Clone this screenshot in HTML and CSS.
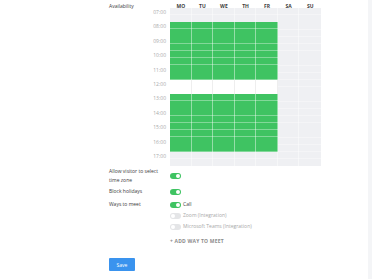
FILE: index.html
```html
<!DOCTYPE html>
<html>
  <head>
    <title>Availability</title>
    <meta name="viewport" content="width=device-width, initial-scale=1">
    <link rel="stylesheet" href="styles.css">
  </head>
  <body>
    <div class="page">
      <div class="settings">
        <div class="row availability">
          <div class="label label-short">Availability</div>
          <div class="schedule">
            <div class="corner"></div>
            <div class="day">MO</div>
            <div class="day">TU</div>
            <div class="day">WE</div>
            <div class="day">TH</div>
            <div class="day">FR</div>
            <div class="day">SA</div>
            <div class="day">SU</div>

            <div class="hours">
              <div>07:00</div>
              <div>08:00</div>
              <div>09:00</div>
              <div>10:00</div>
              <div>11:00</div>
              <div>12:00</div>
              <div>13:00</div>
              <div>14:00</div>
              <div>15:00</div>
              <div>16:00</div>
              <div>17:00</div>
            </div>

            <div class="col">
              <div class="slot off h1"></div>
              <div class="slot on h4"></div>
              <div class="slot free h1"></div>
              <div class="slot on h4"></div>
              <div class="slot off h1"></div>
            </div>
            <div class="col">
              <div class="slot off h1"></div>
              <div class="slot on h4"></div>
              <div class="slot free h1"></div>
              <div class="slot on h4"></div>
              <div class="slot off h1"></div>
            </div>
            <div class="col">
              <div class="slot off h1"></div>
              <div class="slot on h4"></div>
              <div class="slot free h1"></div>
              <div class="slot on h4"></div>
              <div class="slot off h1"></div>
            </div>
            <div class="col">
              <div class="slot off h1"></div>
              <div class="slot on h4"></div>
              <div class="slot free h1"></div>
              <div class="slot on h4"></div>
              <div class="slot off h1"></div>
            </div>
            <div class="col">
              <div class="slot off h1"></div>
              <div class="slot on h4"></div>
              <div class="slot free h1"></div>
              <div class="slot on h4"></div>
              <div class="slot off h1"></div>
            </div>
            <div class="col">
              <div class="slot off h11"></div>
            </div>
            <div class="col">
              <div class="slot off h11"></div>
            </div>
          </div>
        </div>

        <div class="row timezone">
          <div class="label">Allow visitor to select time zone</div>
          <div class="control"><span class="toggle checked"></span></div>
        </div>

        <div class="row holidays">
          <div class="label">Block holidays</div>
          <div class="control"><span class="toggle checked"></span></div>
        </div>

        <div class="row meet">
          <div class="label">Ways to meet</div>
          <div class="options">
            <div class="option"><span class="toggle checked"></span>Call</div>
            <div class="option disabled"><span class="toggle"></span>Zoom (Integration)</div>
            <div class="option disabled"><span class="toggle"></span>Microsoft Teams (Integration)</div>
            <div class="add">+ ADD WAY TO MEET</div>
          </div>
        </div>

        <button class="save">Save</button>
      </div>
      <div class="rail"></div>
    </div>
  </body>
</html>
```

FILE: styles.css
```css
html, body {
  margin: 0;
  height: 100%;
  background: #ffffff;
}
body {
  font-family: "Open Sans", "Liberation Sans", sans-serif;
  font-size: 5px;
  color: #3c3c3c;
}
.page {
  display: flex;
  height: 100%;
}
.settings {
  flex: 1;
  padding: 2px 0 0 109px;
}
.rail {
  width: 4px;
  background: #f4f5f7;
}

.row {
  display: flex;
}
.label {
  width: 61px;
  line-height: 9px;
  padding-right: 6px;
  box-sizing: border-box;
}
.label-short {
  width: 41px;
  line-height: 7px;
  margin-top: 1px;
}

/* schedule grid */
.schedule {
  display: grid;
  grid-template-columns: 20px repeat(7, 1fr);
  grid-template-rows: 6px 158.4px;
  width: 171px;
}
.day {
  text-align: center;
  font-weight: 700;
  line-height: 8px;
  color: #3c3c3c;
}
.hours {
  display: flex;
  flex-direction: column;
  padding-right: 4px;
}
.hours div {
  height: 14.4px;
  line-height: 8px;
  text-align: right;
  color: #a8a8a8;
}
.col {
  display: flex;
  flex-direction: column;
}
.slot {
  box-sizing: border-box;
  border-right: 1px solid rgba(255, 255, 255, 0.45);
  background-image: repeating-linear-gradient(to bottom, transparent 0, transparent 6.4px, rgba(255, 255, 255, 0.35) 6.4px, rgba(255, 255, 255, 0.35) 7.2px);
}
.col:last-child .slot {
  border-right: none;
}
.h1 { height: 14.4px; }
.h4 { height: 57.6px; }
.h11 { height: 158.4px; }
.off {
  background-color: #eff0f3;
}
.on {
  background-color: #3fc362;
}
.free {
  background-color: #ffffff;
  background-image: none;
  border-right-color: #eeeeee;
}

/* form rows */
.timezone {
  margin-top: 1px;
  align-items: center;
}
.holidays {
  margin-top: 2px;
  align-items: center;
}
.meet {
  margin-top: 4px;
}
.control {
  display: flex;
  align-items: center;
}
.toggle {
  position: relative;
  display: inline-block;
  width: 11px;
  height: 6px;
  border-radius: 3px;
  background: #e4e5e7;
  margin-right: 2px;
  flex-shrink: 0;
}
.toggle::after {
  content: "";
  position: absolute;
  top: 1px;
  left: 1px;
  width: 4px;
  height: 4px;
  border-radius: 50%;
  background: #ffffff;
}
.toggle.checked {
  background: #3fc362;
}
.toggle.checked::after {
  left: 6px;
}
.options {
  display: flex;
  flex-direction: column;
  gap: 2px;
}
.option {
  display: flex;
  align-items: center;
  line-height: 9px;
}
.option.disabled {
  color: #a8a8a8;
}
.add {
  margin-top: 4px;
  line-height: 9px;
  font-weight: 700;
  color: #8c8c8c;
  letter-spacing: 0.2px;
}
.save {
  display: block;
  margin-top: 12px;
  width: 26px;
  height: 13px;
  padding: 0;
  border: none;
  border-radius: 1px;
  background: #3a93ee;
  color: #ffffff;
  font-family: inherit;
  font-size: 5px;
}
```
